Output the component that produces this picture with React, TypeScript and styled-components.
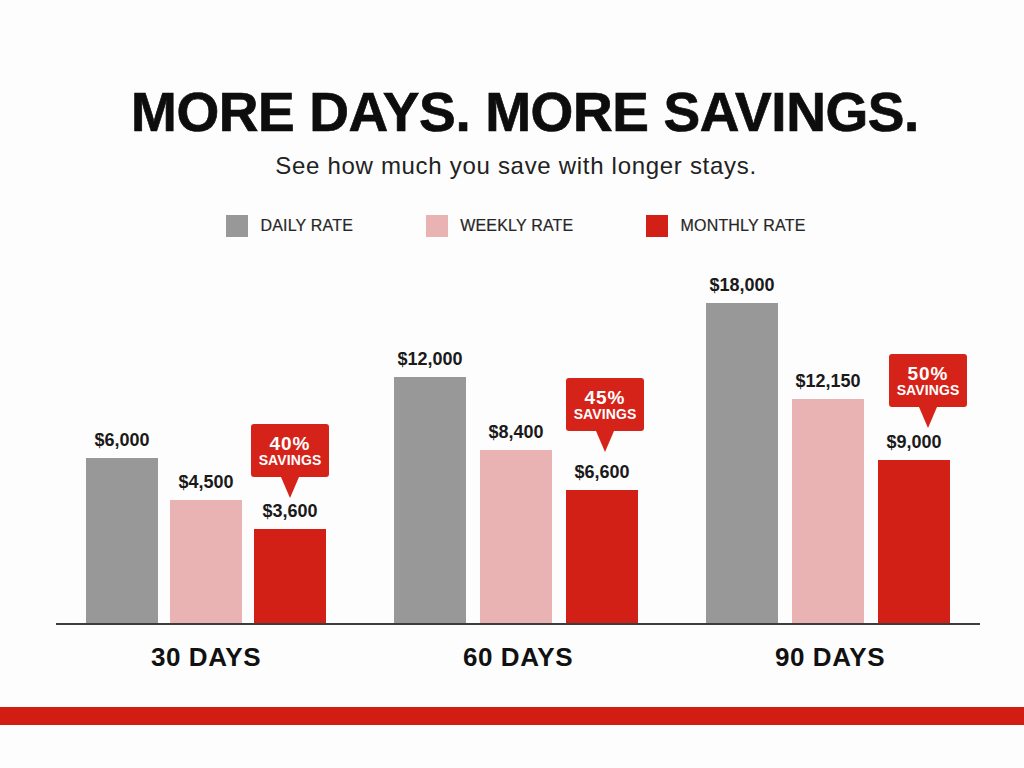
import React from 'react';
import styled, { createGlobalStyle } from 'styled-components';

type Kind = 'daily' | 'weekly' | 'monthly';

interface IBadge {
    pct: string
    dx: number
    gap: number
}

interface IBar {
    kind: Kind
    value: string
    height: number
    badge?: IBadge
}

interface IGroup {
    label: string
    gap: number
    bars: IBar[]
}

const COLORS: Record<Kind, string> = {
    daily: '#999898',
    weekly: '#e9b3b3',
    monthly: '#d32016',
};

const LEGEND: { kind: Kind, label: string }[] = [
    { kind: 'daily', label: 'DAILY RATE' },
    { kind: 'weekly', label: 'WEEKLY RATE' },
    { kind: 'monthly', label: 'MONTHLY RATE' },
];

// heights are in pixels, read off the original chart
const GROUPS: IGroup[] = [
    {
        label: '30 DAYS',
        gap: 12,
        bars: [
            { kind: 'daily', value: '$6,000', height: 165 },
            { kind: 'weekly', value: '$4,500', height: 123 },
            { kind: 'monthly', value: '$3,600', height: 94, badge: { pct: '40%', dx: 0, gap: 4 } },
        ],
    },
    {
        label: '60 DAYS',
        gap: 14,
        bars: [
            { kind: 'daily', value: '$12,000', height: 246 },
            { kind: 'weekly', value: '$8,400', height: 173 },
            { kind: 'monthly', value: '$6,600', height: 133, badge: { pct: '45%', dx: 3, gap: 11 } },
        ],
    },
    {
        label: '90 DAYS',
        gap: 14,
        bars: [
            { kind: 'daily', value: '$18,000', height: 320 },
            { kind: 'weekly', value: '$12,150', height: 224 },
            { kind: 'monthly', value: '$9,000', height: 163, badge: { pct: '50%', dx: 14, gap: 5 } },
        ],
    },
];

const App: React.FC = () => {
    return (
        <>
            <GlobalStyle />
            <Page>
                <Title>MORE DAYS. MORE SAVINGS.</Title>
                <Subtitle>See how much you save with longer stays.</Subtitle>

                <Legend>
                    {LEGEND.map((item) => (
                        <LegendItem key={item.kind}>
                            <Swatch kind={item.kind} />
                            <LegendLabel>{item.label}</LegendLabel>
                        </LegendItem>
                    ))}
                </Legend>

                <Chart>
                    <Plot>
                        {GROUPS.map((group) => (
                            <Group key={group.label} gap={group.gap}>
                                {group.bars.map((bar) => (
                                    <Column key={bar.kind}>
                                        {bar.badge && (
                                            <Badge dx={bar.badge.dx} gap={bar.badge.gap}>
                                                <BadgePct>{bar.badge.pct}</BadgePct>
                                                <BadgeText>SAVINGS</BadgeText>
                                            </Badge>
                                        )}
                                        <Value>{bar.value}</Value>
                                        <Bar kind={bar.kind} style={{ height: bar.height }} />
                                    </Column>
                                ))}
                            </Group>
                        ))}
                    </Plot>
                    <Axis />
                    <Labels>
                        {GROUPS.map((group) => (
                            <GroupLabel key={group.label}>{group.label}</GroupLabel>
                        ))}
                    </Labels>
                </Chart>

                <Band />
            </Page>
        </>
    )
}

export default App

const GlobalStyle = createGlobalStyle`
    html, body {
        margin: 0;
        padding: 0;
        background: #fdfdfd;
    }
    body {
        font-family: "Liberation Sans", Arial, Helvetica, sans-serif;
        color: #111;
    }
`

interface IKind {
    kind: Kind
}

interface IGap {
    gap: number
}

interface IBadgeProps {
    dx: number
    gap: number
}

const Page = styled.div`
    width: 1024px;
    height: 768px;
    overflow: hidden;
    display: flex;
    flex-direction: column;
    align-items: center;
    padding-top: 85px;
    box-sizing: border-box;
    background: #fdfdfd;
`

const Title = styled.h1`
    margin: 0;
    padding-left: 26px;
    font-size: 55px;
    line-height: 1;
    font-weight: 700;
    letter-spacing: -0.4px;
    color: #0d0d0d;
    -webkit-text-stroke: 0.7px #0d0d0d;
    white-space: nowrap;
`

const Subtitle = styled.p`
    margin: 14px 0 0;
    padding-left: 8px;
    font-size: 24px;
    line-height: 1;
    letter-spacing: 0.7px;
    color: #222;
`

const Legend = styled.div`
    display: flex;
    align-items: center;
    gap: 73px;
    margin-top: 37px;
    padding-left: 8px;
`

const LegendItem = styled.div`
    display: flex;
    align-items: center;
    gap: 12px;
`

const Swatch = styled.span<IKind>`
    width: 22px;
    height: 22px;
    background: ${(props) => COLORS[props.kind]};
`

const LegendLabel = styled.span`
    font-size: 16px;
    line-height: 1;
    color: #262626;
    letter-spacing: 0.2px;
    -webkit-text-stroke: 0.2px #262626;
`

const Chart = styled.div`
    align-self: flex-start;
    margin-left: 56px;
    margin-top: 23px;
    width: 924px;
    display: flex;
    flex-direction: column;
`

const Plot = styled.div`
    height: 363px;
    padding: 0 30px;
    display: flex;
    align-items: flex-end;
    justify-content: space-between;
`

const Group = styled.div<IGap>`
    display: flex;
    align-items: flex-end;
    gap: ${(props) => props.gap}px;
`

const Column = styled.div`
    width: 72px;
    display: flex;
    flex-direction: column;
    align-items: center;
`

const Value = styled.div`
    font-size: 18px;
    line-height: 1;
    font-weight: 700;
    color: #1a1a1a;
    margin-bottom: 9px;
    white-space: nowrap;
`

const Bar = styled.div<IKind>`
    width: 72px;
    background: ${(props) => COLORS[props.kind]};
`

const Badge = styled.div<IBadgeProps>`
    position: relative;
    flex-shrink: 0;
    width: 78px;
    box-sizing: border-box;
    padding: 10px 0 10px;
    margin-bottom: ${(props) => 21 + props.gap}px;
    transform: translateX(${(props) => props.dx}px);
    background: #d6231a;
    border-radius: 3px;
    display: flex;
    flex-direction: column;
    align-items: center;
    color: #fff;

    &::after {
        content: '';
        position: absolute;
        top: 100%;
        left: 50%;
        margin-left: -9px;
        border-left: 9px solid transparent;
        border-right: 9px solid transparent;
        border-top: 21px solid #d6231a;
    }
`

const BadgePct = styled.span`
    font-size: 19px;
    line-height: 1;
    font-weight: 700;
    letter-spacing: 1px;
`

const BadgeText = styled.span`
    font-size: 14px;
    line-height: 1;
    font-weight: 700;
    letter-spacing: 0.1px;
`

const Axis = styled.div`
    height: 2px;
    background: #3c3c3c;
`

const Labels = styled.div`
    display: flex;
    justify-content: space-between;
    padding: 0 30px;
    margin-top: 19px;
`

const GroupLabel = styled.div`
    width: 240px;
    text-align: center;
    font-size: 26px;
    line-height: 1;
    font-weight: 700;
    letter-spacing: 0.6px;
    color: #111;
`

const Band = styled.div`
    align-self: stretch;
    height: 18px;
    margin-top: 37px;
    background: #d21e12;
`
